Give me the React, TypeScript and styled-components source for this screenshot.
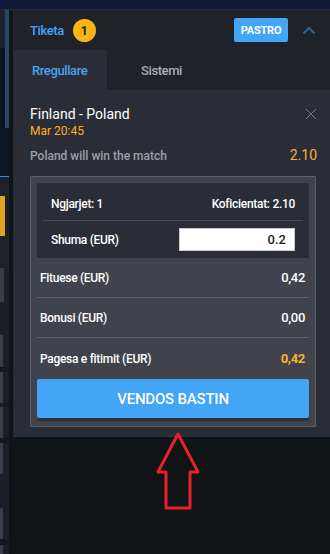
import React from 'react'
import styled, { createGlobalStyle } from 'styled-components'

const BLUE = '#42a5f5'
const ORANGE = '#fbb12b'
const PANEL_HEAD = '#1f2229'
const PANEL_BODY = '#2a2d36'
const BOX_BG = '#40434c'
const BOX_BORDER = '#5d6069'
const COND = `'Roboto', 'Liberation Sans', sans-serif`

const GlobalStyle = createGlobalStyle`
  html, body { margin: 0; padding: 0; background: #111417; }
  body { width: 330px; height: 554px; overflow: hidden; font-family: 'Roboto', sans-serif; }
`

const Page = styled.div`
  width: 330px;
  height: 554px;
  overflow: hidden;
  display: flex;
  flex-direction: column;
  background: #111417;
`

const TopStrip = styled.div`
  height: 9px;
  background: #101a36;
  border-bottom: 1px solid #1d2f45;
  flex-shrink: 0;
`

const Main = styled.div`
  flex: 1;
  display: flex;
  align-items: flex-start;
  overflow: hidden;
`

const SideCol = styled.div`
  width: 9px;
  margin-right: 4px;
  display: flex;
  flex-direction: column;
  align-self: stretch;
  background: #1b1e24;
  overflow: hidden;
`

const SideBlock = styled.div<{ h: number; bg: string; w?: number }>`
  height: ${({ h }) => h}px;
  width: ${({ w }) => (w ? `${w}px` : '100%')};
  background: ${({ bg }) => bg};
  flex-shrink: 0;
`

const ScrollArea = styled.div`
  height: 166px;
  background: linear-gradient(#1b2430 0 38px, #0c1625 38px);
  display: flex;
  justify-content: flex-end;
  border-bottom: 1px solid #3b8fe0;
  flex-shrink: 0;
`

const ScrollThumb = styled.div`
  width: 4px;
  height: 118px;
  background: #284867;
`

const RightCol = styled.div`
  flex: 1;
  display: flex;
  flex-direction: column;
`

const Panel = styled.div`
  height: 426px;
  border-left: 1px solid #1b2d3c;
  border-bottom: 1px solid #1b3a4e;
  background: ${PANEL_BODY};
  display: flex;
  flex-direction: column;
`

const Header = styled.div`
  height: 40px;
  background: ${PANEL_HEAD};
  display: flex;
  align-items: center;
  padding: 0 14px 0 16px;
`

const Title = styled.span`
  font-family: ${COND};
  font-size: 13px;
  font-weight: 500;
  letter-spacing: -0.4px;
  color: ${BLUE};
  margin-right: 9px;
`

const Badge = styled.span`
  width: 23px;
  height: 23px;
  border-radius: 50%;
  background: #fbb516;
  color: #2a2100;
  font-family: ${COND};
  font-size: 13px;
  font-weight: 700;
  display: flex;
  align-items: center;
  justify-content: center;
`

const Spacer = styled.div`
  flex: 1;
`

const ClearButton = styled.button`
  width: 54px;
  height: 24px;
  padding: 0;
  border: none;
  border-radius: 2px;
  background: ${BLUE};
  color: #fff;
  font-family: ${COND};
  font-size: 11px;
  font-weight: 700;
  letter-spacing: -0.2px;
  margin-right: 14px;
`

const Tabs = styled.div`
  height: 40px;
  display: flex;
  background: ${PANEL_HEAD};
`

const Tab = styled.div<{ active?: boolean }>`
  width: ${({ active }) => (active ? '93px' : 'auto')};
  padding-left: ${({ active }) => (active ? '18px' : '34px')};
  box-sizing: border-box;
  display: flex;
  align-items: center;
  background: ${({ active }) => (active ? PANEL_BODY : 'transparent')};
  color: ${({ active }) => (active ? BLUE : '#a9acb3')};
  font-family: ${COND};
  font-size: 13px;
  font-weight: 500;
  letter-spacing: -0.4px;
`

const Body = styled.div`
  padding: 16px 13px 0 16px;
  display: flex;
  flex-direction: column;
`

const MatchRow = styled.div`
  display: flex;
  justify-content: space-between;
  align-items: flex-start;
`

const MatchName = styled.div`
  font-size: 14px;
  color: #fff;
  line-height: 17px;
`

const MatchTime = styled.div`
  font-size: 12px;
  color: ${ORANGE};
  margin-top: 1px;
`

const PickRow = styled.div`
  display: flex;
  justify-content: space-between;
  align-items: baseline;
  margin-top: 9px;
`

const PickText = styled.span`
  font-size: 12px;
  font-weight: 500;
  color: #9da0a8;
`

const PickOdd = styled.span`
  font-size: 14px;
  color: ${ORANGE};
`

const Box = styled.div`
  margin-top: 13px;
  margin-right: 1px;
  border: 1px solid ${BOX_BORDER};
  border-radius: 1px;
  background: ${BOX_BG};
  padding: 6px 6px 8px;
  display: flex;
  flex-direction: column;
`

const Summary = styled.div`
  background: ${PANEL_BODY};
  padding: 0 6px;
`

const SumRow = styled.div<{ line?: boolean }>`
  height: ${({ line }) => (line ? '33px' : '37px')};
  padding: ${({ line }) => (line ? '4px 8px 0' : '0 8px')};
  display: flex;
  align-items: center;
  justify-content: space-between;
  border-bottom: ${({ line }) => (line ? '1px solid #474a53' : 'none')};
  font-family: ${COND};
  font-size: 12px;
  font-weight: 500;
  letter-spacing: -0.3px;
  color: #fff;
`

const StakeInput = styled.input`
  width: 116px;
  height: 23px;
  box-sizing: border-box;
  border: 1px solid #c9c9c9;
  background: #fff;
  text-align: right;
  padding: 0 8px;
  font-family: ${COND};
  font-size: 13px;
  font-weight: 500;
  color: #222;
  outline: none;
`

const InfoRow = styled.div<{ last?: boolean }>`
  height: ${({ last }) => (last ? '41px' : '39px')};
  display: flex;
  align-items: center;
  justify-content: space-between;
  padding: 0 4px 0 3px;
  border-bottom: ${({ last }) => (last ? 'none' : '1px solid #5a5d66')};
  font-family: ${COND};
  font-size: 12px;
  font-weight: 500;
  letter-spacing: -0.3px;
  color: #fff;
`

const Value = styled.span<{ accent?: boolean }>`
  color: ${({ accent }) => (accent ? ORANGE : '#fff')};
  font-weight: ${({ accent }) => (accent ? 700 : 500)};
  font-size: 13px;
`

const PlaceButton = styled.button`
  height: 39px;
  border: none;
  border-radius: 2px;
  background: ${BLUE};
  color: #fff;
  font-family: ${COND};
  font-size: 15px;
  font-weight: 500;
  letter-spacing: -0.2px;
  box-shadow: 0 3px 0 #2e3037;
`

const ArrowWrap = styled.div`
  display: flex;
  justify-content: center;
  padding-left: 13px;
  margin-top: -6px;
`

const Chevron = () => (
  <svg width="14" height="9" viewBox="0 0 14 9">
    <path d="M1.5 7.5 L7 2 L12.5 7.5" fill="none" stroke="#2f6596" strokeWidth="2" />
  </svg>
)

const CloseIcon = () => (
  <svg width="12" height="12" viewBox="0 0 12 12" style={{ marginTop: 2 }}>
    <path d="M1 1 L11 11 M11 1 L1 11" stroke="#7b7e86" strokeWidth="1" />
  </svg>
)

const UpArrow = () => (
  <svg width="46" height="80" viewBox="0 0 46 80">
    <path
      d="M23 3 L43 41 L35 41 L35 77 L11 77 L11 41 L3 41 Z"
      fill="none"
      stroke="#e8202a"
      strokeWidth="3"
      strokeLinejoin="round"
    />
  </svg>
)

const App: React.FC = () => (
  <Page>
    <GlobalStyle />
    <TopStrip />
    <Main>
      <SideCol>
        <ScrollArea>
          <ScrollThumb />
        </ScrollArea>
        <SideBlock h={19} bg="#1e2127" />
        <SideBlock h={40} bg="#e0a320" w={5} />
        <SideBlock h={32} bg="#1e2127" />
        <SideBlock h={34} bg="#3a3d45" w={4} />
        <SideBlock h={33} bg="#1b1e24" />
        <SideBlock h={32} bg="#3a3d45" w={3} />
        <SideBlock h={5} bg="#15181c" />
        <SideBlock h={31} bg="#3a3d45" w={3} />
        <SideBlock h={4} bg="#15181c" />
        <SideBlock h={31} bg="#3a3d45" w={3} />
        <SideBlock h={5} bg="#15181c" />
        <SideBlock h={31} bg="#3a3d45" w={3} />
        <SideBlock h={34} bg="#1b1e24" />
        <SideBlock h={31} bg="#3a3d45" w={3} />
        <SideBlock h={6} bg="#15181c" />
        <SideBlock h={20} bg="#3a3d45" w={3} />
      </SideCol>
      <RightCol>
        <Panel>
          <Header>
            <Title>Tiketa</Title>
            <Badge>1</Badge>
            <Spacer />
            <ClearButton>PASTRO</ClearButton>
            <Chevron />
          </Header>
          <Tabs>
            <Tab active>Rregullare</Tab>
            <Tab>Sistemi</Tab>
          </Tabs>
          <Body>
            <MatchRow>
              <div>
                <MatchName>Finland - Poland</MatchName>
                <MatchTime>Mar 20:45</MatchTime>
              </div>
              <CloseIcon />
            </MatchRow>
            <PickRow>
              <PickText>Poland will win the match</PickText>
              <PickOdd>2.10</PickOdd>
            </PickRow>
            <Box>
              <Summary>
                <SumRow line>
                  <span>Ngjarjet: 1</span>
                  <span>Koficientat: 2.10</span>
                </SumRow>
                <SumRow>
                  <span>Shuma (EUR)</span>
                  <StakeInput defaultValue="0.2" />
                </SumRow>
              </Summary>
              <InfoRow>
                <span>Fituese (EUR)</span>
                <Value>0,42</Value>
              </InfoRow>
              <InfoRow>
                <span>Bonusi (EUR)</span>
                <Value>0,00</Value>
              </InfoRow>
              <InfoRow last>
                <span>Pagesa e fitimit (EUR)</span>
                <Value accent>0,42</Value>
              </InfoRow>
              <PlaceButton>VENDOS BASTIN</PlaceButton>
            </Box>
          </Body>
        </Panel>
        <ArrowWrap>
          <UpArrow />
        </ArrowWrap>
      </RightCol>
    </Main>
  </Page>
)

export default App
